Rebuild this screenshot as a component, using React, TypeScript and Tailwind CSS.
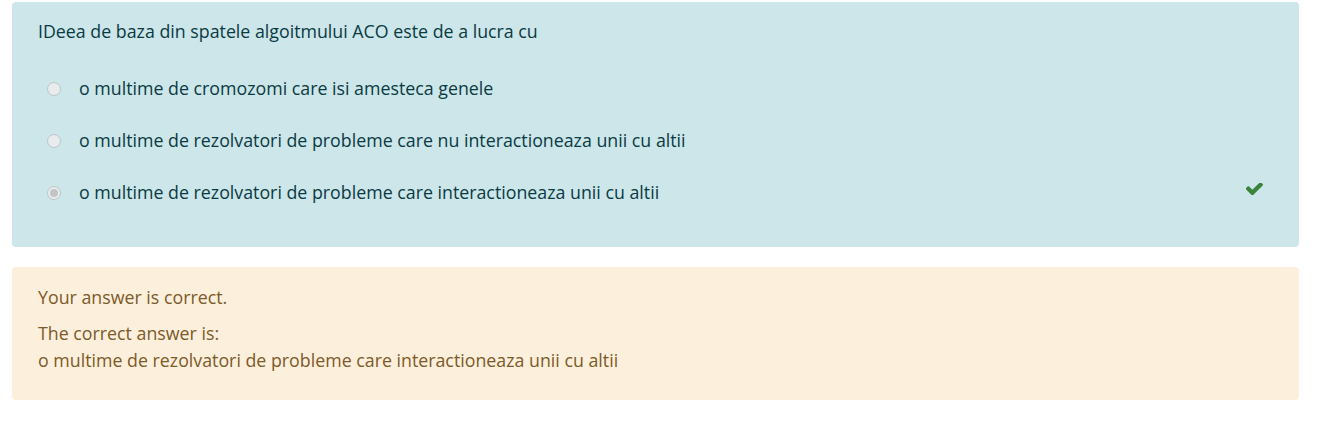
import React from 'react';

const options = [
  { label: 'o multime de cromozomi care isi amesteca genele', checked: false },
  { label: 'o multime de rezolvatori de probleme care nu interactioneaza unii cu altii', checked: false },
  { label: 'o multime de rezolvatori de probleme care interactioneaza unii cu altii', checked: true },
];

function Radio({ checked }: { checked: boolean }) {
  return (
    <span className="w-[14px] h-[14px] rounded-full border border-[#bfc4c7] bg-[#e9ecef] flex items-center justify-center shrink-0">
      {checked && <span className="w-[8px] h-[8px] rounded-full bg-[#c2c5c8]" />}
    </span>
  );
}

// classic font awesome 4 check glyph
function Check() {
  return (
    <svg viewBox="141 430 1530 1026" className="w-[17px] h-[12px] mb-[8px]" fill="#3a833a">
      <path d="M1671 566q0 40-28 68l-724 724-136 136q-28 28-68 28t-68-28l-136-136-362-362q-28-28-28-68t28-68l136-136q28-28 68-28t68 28l294 295 656-657q28-28 68-28t68 28l136 136q28 28 28 68z" />
    </svg>
  );
}

export default function App() {
  return (
    <div
      className="w-[1323px] h-[428px] bg-white pl-[12px] pr-[24px] pt-[2px] text-[17.8px] leading-[27px]"
      style={{ fontFamily: '"Open Sans", "Noto Sans", sans-serif' }}
    >
      {/* Question */}
      <div className="bg-[#cce6ea] text-[#0a3a42] rounded-[4px] pl-[26px] pr-[36px] pt-[16px] pb-[41px]">
        <p>IDeea de baza din spatele algoitmului ACO este de a lucra cu</p>
        <div className="mt-[30px] flex flex-col gap-[25px]">
          {options.map((o) => (
            <div key={o.label} className="flex items-center">
              <span className="ml-[9px] mr-[18px]">
                <Radio checked={o.checked} />
              </span>
              <span className="flex-1">{o.label}</span>
              {o.checked && <Check />}
            </div>
          ))}
        </div>
      </div>

      {/* Feedback */}
      <div className="mt-[20px] bg-[#fcefdc] text-[#7d5a29] rounded-[4px] px-[26px] pt-[17px] pb-[26px]">
        <p>Your answer is correct.</p>
        <p className="mt-[9px]">The correct answer is:</p>
        <p>o multime de rezolvatori de probleme care interactioneaza unii cu altii</p>
      </div>
    </div>
  );
}
